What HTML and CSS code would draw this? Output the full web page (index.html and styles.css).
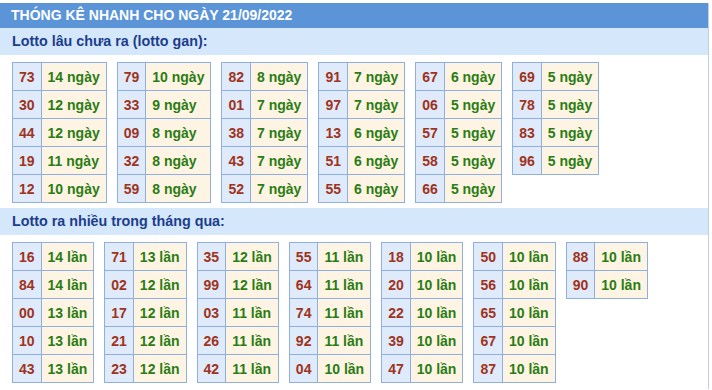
FILE: index.html
```html
<!DOCTYPE html>
<html lang="vi">
<head>
<meta charset="utf-8">
<link rel="stylesheet" href="styles.css">
</head>
<body>
<div class="box">
  <div class="title">THÓNG KÊ NHANH CHO NGÀY 21/09/2022</div>
  <div class="sub">Lotto lâu chưa ra (lotto gan):</div>
  <div class="group">
    <table><tr><td class="n">73</td><td class="v">14 ngày</td></tr><tr><td class="n">30</td><td class="v">12 ngày</td></tr><tr><td class="n">44</td><td class="v">12 ngày</td></tr><tr><td class="n">19</td><td class="v">11 ngày</td></tr><tr><td class="n">12</td><td class="v">10 ngày</td></tr></table>
    <table><tr><td class="n">79</td><td class="v">10 ngày</td></tr><tr><td class="n">33</td><td class="v">9 ngày</td></tr><tr><td class="n">09</td><td class="v">8 ngày</td></tr><tr><td class="n">32</td><td class="v">8 ngày</td></tr><tr><td class="n">59</td><td class="v">8 ngày</td></tr></table>
    <table><tr><td class="n">82</td><td class="v">8 ngày</td></tr><tr><td class="n">01</td><td class="v">7 ngày</td></tr><tr><td class="n">38</td><td class="v">7 ngày</td></tr><tr><td class="n">43</td><td class="v">7 ngày</td></tr><tr><td class="n">52</td><td class="v">7 ngày</td></tr></table>
    <table><tr><td class="n">91</td><td class="v">7 ngày</td></tr><tr><td class="n">97</td><td class="v">7 ngày</td></tr><tr><td class="n">13</td><td class="v">6 ngày</td></tr><tr><td class="n">51</td><td class="v">6 ngày</td></tr><tr><td class="n">55</td><td class="v">6 ngày</td></tr></table>
    <table><tr><td class="n">67</td><td class="v">6 ngày</td></tr><tr><td class="n">06</td><td class="v">5 ngày</td></tr><tr><td class="n">57</td><td class="v">5 ngày</td></tr><tr><td class="n">58</td><td class="v">5 ngày</td></tr><tr><td class="n">66</td><td class="v">5 ngày</td></tr></table>
    <table><tr><td class="n">69</td><td class="v">5 ngày</td></tr><tr><td class="n">78</td><td class="v">5 ngày</td></tr><tr><td class="n">83</td><td class="v">5 ngày</td></tr><tr><td class="n">96</td><td class="v">5 ngày</td></tr></table>
  </div>
  <div class="sub">Lotto ra nhiều trong tháng qua:</div>
  <div class="group">
    <table><tr><td class="n">16</td><td class="v">14 lần</td></tr><tr><td class="n">84</td><td class="v">14 lần</td></tr><tr><td class="n">00</td><td class="v">13 lần</td></tr><tr><td class="n">10</td><td class="v">13 lần</td></tr><tr><td class="n">43</td><td class="v">13 lần</td></tr></table>
    <table><tr><td class="n">71</td><td class="v">13 lần</td></tr><tr><td class="n">02</td><td class="v">12 lần</td></tr><tr><td class="n">17</td><td class="v">12 lần</td></tr><tr><td class="n">21</td><td class="v">12 lần</td></tr><tr><td class="n">23</td><td class="v">12 lần</td></tr></table>
    <table><tr><td class="n">35</td><td class="v">12 lần</td></tr><tr><td class="n">99</td><td class="v">12 lần</td></tr><tr><td class="n">03</td><td class="v">11 lần</td></tr><tr><td class="n">26</td><td class="v">11 lần</td></tr><tr><td class="n">42</td><td class="v">11 lần</td></tr></table>
    <table><tr><td class="n">55</td><td class="v">11 lần</td></tr><tr><td class="n">64</td><td class="v">11 lần</td></tr><tr><td class="n">74</td><td class="v">11 lần</td></tr><tr><td class="n">92</td><td class="v">11 lần</td></tr><tr><td class="n">04</td><td class="v">10 lần</td></tr></table>
    <table><tr><td class="n">18</td><td class="v">10 lần</td></tr><tr><td class="n">20</td><td class="v">10 lần</td></tr><tr><td class="n">22</td><td class="v">10 lần</td></tr><tr><td class="n">39</td><td class="v">10 lần</td></tr><tr><td class="n">47</td><td class="v">10 lần</td></tr></table>
    <table><tr><td class="n">50</td><td class="v">10 lần</td></tr><tr><td class="n">56</td><td class="v">10 lần</td></tr><tr><td class="n">65</td><td class="v">10 lần</td></tr><tr><td class="n">67</td><td class="v">10 lần</td></tr><tr><td class="n">87</td><td class="v">10 lần</td></tr></table>
    <table><tr><td class="n">88</td><td class="v">10 lần</td></tr><tr><td class="n">90</td><td class="v">10 lần</td></tr></table>
  </div>
</div>
</body>
</html>
```

FILE: styles.css
```css
html, body {
  margin: 0;
  padding: 0;
  background: #ffffff;
}
body {
  font-family: "Liberation Sans", Arial, sans-serif;
}
.box {
  margin: 3px 3px 0 0;
  border-right: 1px solid #c3cfdc;
  padding-bottom: 1px;
}
.title {
  height: 25px;
  line-height: 25px;
  padding-left: 11px;
  background: #5b95d8;
  color: #ffffff;
  font-size: 14px;
  font-weight: bold;
}
.sub {
  height: 27px;
  line-height: 27px;
  padding-left: 12px;
  background: #d5e7fb;
  color: #1b3d8c;
  font-size: 14.3px;
  font-weight: bold;
}
.group {
  display: flex;
  flex-wrap: wrap;
  align-items: flex-start;
  gap: 10px;
  padding: 7px 0 5px 12px;
}
table {
  border-collapse: collapse;
  font-size: 14px;
  font-weight: bold;
}
td {
  border: 1px solid #8fafe0;
  height: 28px;
  padding: 0 6px;
  box-sizing: border-box;
  white-space: nowrap;
}
td.n {
  background: #dfeafa;
  color: #9e3320;
  text-align: center;
}
td.v {
  background: #fdf4e3;
  color: #2b7c14;
}
```
